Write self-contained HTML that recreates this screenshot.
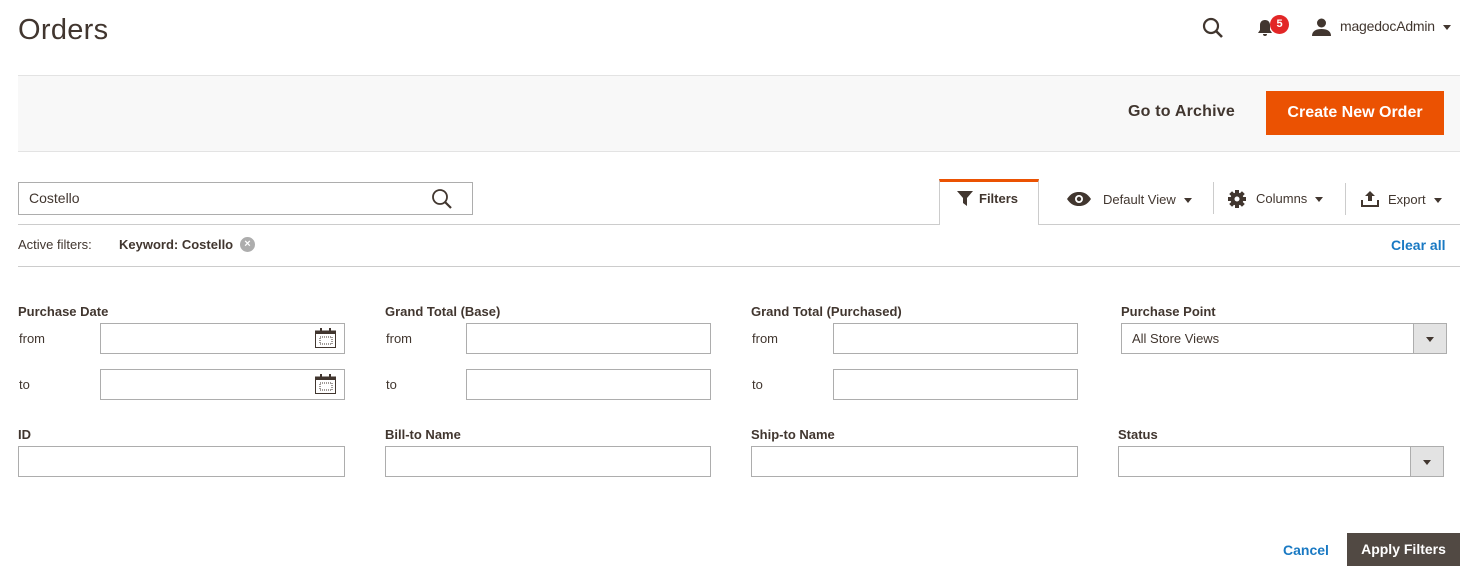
<!DOCTYPE html><html><head><style>
*{box-sizing:border-box;margin:0;padding:0}
body{width:1479px;height:574px;background:#fff;font-family:"Liberation Sans",sans-serif;color:#303030;position:relative;overflow:hidden}
.a{position:absolute}
.t{font-size:13px;color:#41362f;white-space:nowrap}
.b{font-weight:bold;color:#41362f}
.in{position:absolute;border:1px solid #adadad;background:#fff;height:31px}
.sel .ar{position:absolute;right:0;top:0;bottom:0;width:33px;background:#e3e3e3;border-left:1px solid #adadad}
.sel .ar:after{content:"";position:absolute;left:12px;top:13px;border-left:4px solid transparent;border-right:4px solid transparent;border-top:5px solid #41362f}
.caret{display:inline-block;border-left:4px solid transparent;border-right:4px solid transparent;border-top:5px solid #41362f;vertical-align:middle;margin-left:8px}
</style></head><body>
<div class="a" style="left:18px;top:14px;font-size:29px;color:#41362f;letter-spacing:.3px">Orders</div>
<svg class="a" style="left:1202px;top:17px" width="22" height="22" viewBox="0 0 22 22"><circle cx="9" cy="9" r="7" fill="none" stroke="#41362f" stroke-width="2.2"/><path d="M14 14l6 6" stroke="#41362f" stroke-width="2.6"/></svg>
<svg class="a" style="left:1257px;top:19px" width="16" height="18" viewBox="0 0 16 18"><path d="M8 1c-3 0-5 2-5 5v5l-2 3h14l-2-3V6c0-3-2-5-5-5z M6 15a2 2 0 004 0z" fill="#41362f"/></svg>
<div class="a" style="left:1270px;top:15px;width:19px;height:19px;border-radius:50%;background:#e22626;color:#fff;font-size:11px;font-weight:bold;text-align:center;line-height:19px">5</div>
<svg class="a" style="left:1312px;top:17px" width="19" height="19" viewBox="0 0 19 19"><circle cx="9.5" cy="6" r="4.5" fill="#41362f"/><path d="M0 19c0-5 4-7 9.5-7s9.5 2 9.5 7z" fill="#41362f"/></svg>
<div class="a t" style="left:1340px;top:18px;font-size:14px;letter-spacing:-.2px">magedocAdmin<span class="caret" style="margin-left:8px"></span></div>
<div class="a" style="left:18px;top:75px;width:1442px;height:77px;background:#f8f8f8;border-top:1px solid #e3e3e3;border-bottom:1px solid #e3e3e3"></div>
<div class="a" style="left:1128px;top:103px;font-size:16px;color:#41362f;font-weight:bold;letter-spacing:.2px">Go to Archive</div>
<div class="a" style="left:1266px;top:91px;width:178px;height:44px;background:#eb5202;color:#fff;font-size:16px;font-weight:bold;text-align:center;line-height:44px">Create New Order</div>
<div class="in" style="left:18px;top:182px;width:455px;height:33px"></div>
<div class="a t" style="left:29px;top:190px;font-size:14px">Costello</div>
<svg class="a" style="left:431px;top:188px" width="22" height="22" viewBox="0 0 22 22"><circle cx="9" cy="9" r="7" fill="none" stroke="#41362f" stroke-width="1.8"/><path d="M14 14l6 6" stroke="#41362f" stroke-width="2.2"/></svg>
<div class="a" style="left:18px;top:224px;width:1442px;height:1px;background:#ccc"></div>
<div class="a" style="left:939px;top:179px;width:100px;height:46px;background:#fff;border:1px solid #ccc;border-top:3px solid #eb5202;border-bottom:none"></div>
<svg class="a" style="left:957px;top:191px" width="16" height="15" viewBox="0 0 16 15"><path d="M0 0h16L10 7v8l-4-3V7z" fill="#41362f"/></svg>
<div class="a t b" style="left:979px;top:191px">Filters</div>
<svg class="a" style="left:1067px;top:192px" width="24" height="14" viewBox="0 0 24 14"><path d="M0 7C4 1 8 0 12 0s8 1 12 7c-4 6-8 7-12 7S4 13 0 7z" fill="#41362f"/><circle cx="12" cy="7" r="4" fill="#fff"/><circle cx="12" cy="7" r="2.2" fill="#41362f"/></svg>
<div class="a t" style="left:1103px;top:192px">Default View<span class="caret"></span></div>
<div class="a" style="left:1213px;top:182px;width:1px;height:32px;background:#ccc"></div>
<svg class="a" style="left:1228px;top:190px" width="18" height="18" viewBox="0 0 18 18"><g fill="#41362f"><circle cx="9" cy="9" r="6.5"/><rect x="7" y="0" width="4" height="18"/><rect x="0" y="7" width="18" height="4"/><rect x="7" y="0" width="4" height="18" transform="rotate(45 9 9)"/><rect x="7" y="0" width="4" height="18" transform="rotate(-45 9 9)"/></g><circle cx="9" cy="9" r="2.5" fill="#fff"/></svg>
<div class="a t" style="left:1256px;top:191px">Columns<span class="caret"></span></div>
<div class="a" style="left:1345px;top:183px;width:1px;height:32px;background:#ccc"></div>
<svg class="a" style="left:1361px;top:191px" width="18" height="16" viewBox="0 0 18 16"><path d="M9 0l5 5h-3v5H7V5H4z M0 9h2v5h14V9h2v7H0z" fill="#41362f"/></svg>
<div class="a t" style="left:1388px;top:192px">Export<span class="caret"></span></div>
<div class="a t" style="left:18px;top:237px">Active filters:</div>
<div class="a t b" style="left:119px;top:237px">Keyword: Costello</div>
<div class="a" style="left:240px;top:237px;width:15px;height:15px;border-radius:50%;background:#adadad;color:#fff;font-size:11px;font-weight:bold;text-align:center;line-height:15px">×</div>
<div class="a" style="left:1391px;top:237px;font-size:14px;font-weight:bold;color:#1979c3">Clear all</div>
<div class="a" style="left:18px;top:266px;width:1442px;height:1px;background:#ccc"></div>

<div class="a t b" style="left:18px;top:304px">Purchase Date</div>
<div class="a t b" style="left:385px;top:304px">Grand Total (Base)</div>
<div class="a t b" style="left:751px;top:304px">Grand Total (Purchased)</div>
<div class="a t b" style="left:1121px;top:304px">Purchase Point</div>
<div class="a t" style="left:19px;top:331px">from</div><div class="a t" style="left:19px;top:377px">to</div>
<div class="a t" style="left:386px;top:331px">from</div><div class="a t" style="left:386px;top:377px">to</div>
<div class="a t" style="left:752px;top:331px">from</div><div class="a t" style="left:752px;top:377px">to</div>
<div class="in" style="left:100px;top:323px;width:245px"></div>
<div class="in" style="left:100px;top:369px;width:245px"></div>
<svg class="a" style="left:315px;top:328px" width="21" height="20" viewBox="0 0 21 20"><rect x="0.5" y="3" width="20" height="16.5" fill="none" stroke="#41362f"/><rect x="0.5" y="3" width="20" height="3" fill="#41362f"/><rect x="5" y="0" width="2" height="4" fill="#41362f"/><rect x="14" y="0" width="2" height="4" fill="#41362f"/><rect x="5" y="9" width="12" height="7" fill="none" stroke="#41362f" stroke-dasharray="1 1"/></svg>
<svg class="a" style="left:315px;top:374px" width="21" height="20" viewBox="0 0 21 20"><rect x="0.5" y="3" width="20" height="16.5" fill="none" stroke="#41362f"/><rect x="0.5" y="3" width="20" height="3" fill="#41362f"/><rect x="5" y="0" width="2" height="4" fill="#41362f"/><rect x="14" y="0" width="2" height="4" fill="#41362f"/><rect x="5" y="9" width="12" height="7" fill="none" stroke="#41362f" stroke-dasharray="1 1"/></svg>
<div class="in" style="left:466px;top:323px;width:245px"></div>
<div class="in" style="left:466px;top:369px;width:245px"></div>
<div class="in" style="left:833px;top:323px;width:245px"></div>
<div class="in" style="left:833px;top:369px;width:245px"></div>
<div class="in sel" style="left:1121px;top:323px;width:326px"><div class="ar"></div></div>
<div class="a t" style="left:1132px;top:331px">All Store Views</div>

<div class="a t b" style="left:18px;top:427px">ID</div>
<div class="a t b" style="left:385px;top:427px">Bill-to Name</div>
<div class="a t b" style="left:751px;top:427px">Ship-to Name</div>
<div class="a t b" style="left:1118px;top:427px">Status</div>
<div class="in" style="left:18px;top:446px;width:327px"></div>
<div class="in" style="left:385px;top:446px;width:326px"></div>
<div class="in" style="left:751px;top:446px;width:327px"></div>
<div class="in sel" style="left:1118px;top:446px;width:326px"><div class="ar"></div></div>

<div class="a" style="left:1283px;top:542px;font-size:14px;font-weight:bold;color:#1979c3">Cancel</div>
<div class="a" style="left:1347px;top:533px;width:113px;height:33px;background:#514943;color:#fff;font-size:14px;font-weight:bold;text-align:center;line-height:33px">Apply Filters</div>
</body></html>
